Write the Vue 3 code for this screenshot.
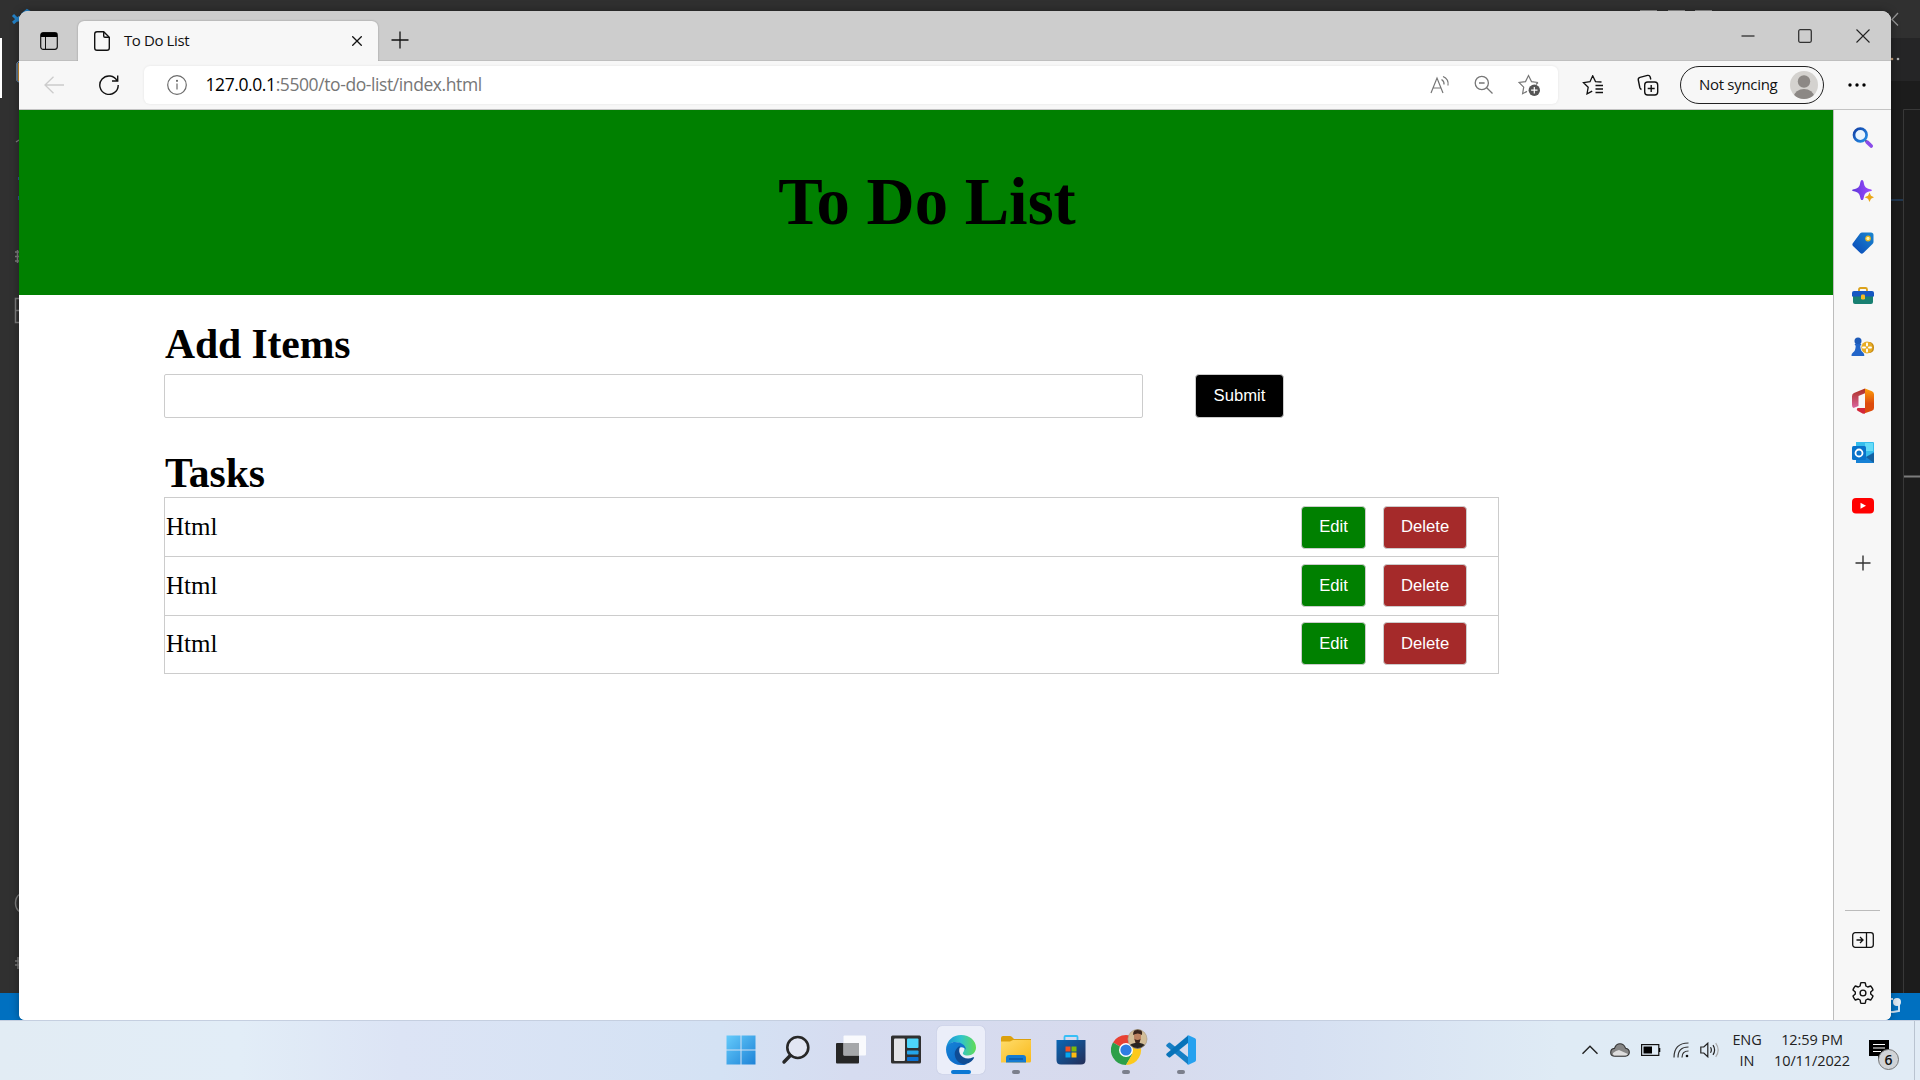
<script setup>
import { ref } from 'vue'

const tasks = ref([
  { id: 1, name: 'Html' },
  { id: 2, name: 'Html' },
  { id: 3, name: 'Html' },
])
const newItem = ref('')
</script>

<template>
  <div class="desktop">
    <!-- Editor window behind the browser -->
    <div class="editor">
      <svg width="1920" height="1020" viewBox="0 0 1920 1020" fill="none">
        <rect width="1920" height="1020" fill="#303030" />
        <path d="M1880 38h40v43h-40z" fill="#252526" />
        <path d="M1880 81h40v912h-40z" fill="#1c1c1c" />
        <path d="M0 993h1920v27H0z" fill="#0070c0" />
        <path d="M0 38h2v60H0z" fill="#fff" />
        <path d="M13 15l6 6M13 23l7-6" stroke="#2382c8" stroke-width="3" />
        <path d="M22 14l5-4 5 3" stroke="#2382c8" stroke-width="2" />
        <path d="M20 61.500h-1.500l-1.500 2v17l1.500 1.500H20" stroke="#8cb9e6" />
        <path d="M18 63h1v18h-1z" fill="#c88a2c" />
        <path d="M16 142l3-2M15 252h4M15 256.500h4M15 261h4M17.500 250v13M20 298.500h-4.500v24H20M16 310.500h4M20 894q-4.500 3-4.500 9t4.500 9M15 961h5M15 965h5M18 957v12" stroke="#7c7c7c" stroke-width="1.500" />
        <path d="M18 177h1v3h-1zM18 196h1v4h-1z" fill="#36558f" />
        <path d="M1640 10.500h17M1668 10.500h17M1695 10.500h17" stroke="#969696" />
        <path d="M1898 13l-6 6.500 6 6" stroke="#969696" stroke-width="1.300" />
        <circle cx="1892" cy="59" r="1.300" fill="#c8a27a" />
        <circle cx="1898" cy="59" r="1.300" fill="#b0b0b0" />
        <path d="M1903.500 993V109.500H1920" stroke="#383838" />
        <path d="M1891 200h12" stroke="#20364e" stroke-width="2" />
        <path d="M1904 476.500h16" stroke="#7c7c7c" stroke-width="2" />
        <path d="M1886 1012h7l6-1v-6" stroke="#cfe2f3" stroke-width="2" />
        <circle cx="1897" cy="1002" r="4" fill="#dfeaf4" />
        <path d="M1889 999h4" stroke="#cfe2f3" stroke-width="2" />
      </svg>
    </div>

    <section class="browser">
      <div class="tabstrip">
        <div class="tab-actions">
          <svg width="18" height="18" viewBox="0 0 18 18" fill="none" stroke="#111">
            <rect x=".7" y=".7" width="16.600" height="16.600" rx="2.500" stroke-width="1.200" />
            <path d="M1 1h16v4H1z" fill="#000" stroke="none" /><path d="M5.500 5v12" />
          </svg>
        </div>
        <div class="tab">
          <svg class="page-icon" width="16" height="20" viewBox="0 0 16 20" fill="none" stroke="#111" stroke-width="1.400">
            <path d="M3 .7h6.700l5.600 5.600V17q0 2.300-2.300 2.300H3Q.7 19.300.7 17V3Q.7.700 3 .7z" /><path d="M9.700.9V5q0 1.300 1.300 1.300h4" />
          </svg>
          <span class="tab-title">To Do List</span>
          <svg class="tab-close" width="10" height="10" viewBox="0 0 10 10" stroke="#111" stroke-width="1.300"><path d="M.3.300l9.400 9.400M9.700.300L.3 9.700" /></svg>
        </div>
        <svg class="new-tab" width="18" height="18" viewBox="0 0 18 18" stroke="#111" stroke-width="1.300"><path d="M9 .5v17M.5 9h17" /></svg>
        <div class="window-buttons">
          <svg width="14" height="14" viewBox="0 0 14 14"><path d="M.5 7h13" stroke="#000" /></svg>
          <svg width="14" height="14" viewBox="0 0 14 14"><rect x=".7" y=".7" width="12.600" height="12.600" rx="1.500" fill="none" stroke="#333" stroke-width="1.300" /></svg>
          <svg width="14" height="14" viewBox="0 0 14 14"><path d="M.5.500l13 13M13.500.500l-13 13" stroke="#222" stroke-width="1.100" /></svg>
        </div>
      </div>

      <div class="toolbar">
        <div class="cell back"><svg width="20" height="18" viewBox="0 0 20 18" fill="none" stroke="#ccc" stroke-width="1.300"><path d="M9.500.700L1 9l8.500 8.300M1 9h19" /></svg></div>
        <div class="cell reload"><svg width="20" height="20" viewBox="0 0 20 20" fill="none" stroke="#111" stroke-width="1.400"><path d="M18.200 6A9.200 9.200 0 1 0 19.200 10M18.700.500V6h-5.700" /></svg></div>
        <div class="address">
          <svg class="info" width="20" height="20" viewBox="0 0 20 20" fill="none" stroke="#6b6b6b" stroke-width="1.200"><circle cx="10" cy="10" r="9.300" /><path d="M10 8.500v6" /><circle cx="10" cy="5.800" r=".5" fill="#6b6b6b" /></svg>
          <span class="url"><b>127.0.0.1</b>:5500/to-do-list/index.html</span>
          <div class="address-icons">
            <svg width="20" height="20" viewBox="0 0 20 20" fill="none" stroke="#777" stroke-width="1.200"><path d="M1 18L7 3l6 15M3.200 13h7.600M11.500 4.500q3 1.800 2.500 5M13 1.500q6 2.500 5 9" /></svg>
            <svg width="20" height="20" viewBox="0 0 20 20" fill="none" stroke="#777" stroke-width="1.300"><circle cx="7.800" cy="8" r="6.600" /><path d="M12.700 12.700l5.800 5.800M5 8h5.600" /></svg>
            <svg width="22" height="22" viewBox="0 0 22 22" fill="none" stroke="#777" stroke-width="1.200"><path d="M20 8.500l-6.500-.9L10.500 1.500 7.500 7.600l-6.500.9 4.700 4.600-1.100 6.600 4.400-2.300M20 8.500l-2 2" /><circle cx="16.300" cy="16.200" r="5.700" fill="#555" stroke="none" /><path d="M16.300 13v6.400M13.100 16.200h6.400" stroke="#fff" /></svg>
          </div>
        </div>
        <svg class="favorites" width="22" height="20" viewBox="0 0 22 20" fill="none" stroke="#111" stroke-width="1.300"><path d="M19.500 7l-6-.4L10.700.800 8 6.700l-6.500.9 4.700 4.600-1.200 6.700 5.200-2.700M13.500 10.500H21M13.500 14H21M13.500 17.500H21" /></svg>
        <svg class="collections" width="22" height="22" viewBox="0 0 22 22" fill="none" stroke="#111" stroke-width="1.400"><rect x="7.700" y="8" width="13" height="13" rx="3" /><path d="M14.200 11v7M10.700 14.500h7M4.500 15.500q-1.300-.5-1.700-2L1.300 6Q.9 4 3 3.400l7.500-2Q12.600 1 13.200 3l.6 2.500" /></svg>
        <div class="profile">
          <span>Not syncing</span>
          <svg width="28" height="28" viewBox="0 0 28 28"><defs><clipPath id="face"><circle cx="14" cy="14" r="14" /></clipPath></defs><g clip-path="url(#face)"><path d="M0 0h28v28H0z" fill="#d4d2cf" /><circle cx="14" cy="10.500" r="6.200" fill="#8c8885" /><ellipse cx="14" cy="25.500" rx="10" ry="7.500" fill="#8c8885" /></g></svg>
        </div>
        <svg class="more" width="18" height="4" viewBox="0 0 18 4"><circle cx="2" cy="2" r="1.700" /><circle cx="9" cy="2" r="1.700" /><circle cx="16" cy="2" r="1.700" /></svg>
      </div>

      <div class="body">
        <main class="page">
          <header class="banner"><h1>To Do List</h1></header>
          <div class="container">
            <h2>Add Items</h2>
            <form class="add-form" @submit.prevent>
              <input v-model="newItem" type="text" />
              <button class="btn submit">Submit</button>
            </form>
            <h2 class="tasks-title">Tasks</h2>
            <ul class="list">
              <li v-for="task in tasks" :key="task.id">
                <span>{{ task.name }}</span>
                <button class="btn edit">Edit</button>
                <button class="btn delete">Delete</button>
              </li>
            </ul>
          </div>
        </main>

        <aside class="sidebar">
          <div><svg width="22" height="22" viewBox="0 0 22 22" fill="none"><defs><linearGradient id="lens" x1="0" y1="0" x2="1" y2="1"><stop stop-color="#123fa5" /><stop offset="1" stop-color="#2491ea" /></linearGradient></defs><path d="M13 13l2 2" stroke="#555" stroke-width="2" /><path d="M15.200 15.200l4 3.800" stroke="#8a4be8" stroke-width="3.700" stroke-linecap="round" /><circle cx="8.300" cy="8" r="6.300" fill="#e9f5ff" stroke="url(#lens)" stroke-width="2.700" /></svg></div>
          <div><svg width="22" height="22" viewBox="0 0 22 22"><defs><linearGradient id="spark"><stop stop-color="#5b35d8" /><stop offset="1" stop-color="#a24bff" /></linearGradient></defs><path d="M10 0q1.500 0 2 4 .7 4 5 5 3 .5 3 1.200t-3 1.200q-4.300 1-5 5-.5 3.600-2 3.600t-2-3.600q-.7-4-5-5-3-.5-3-1.200T3 9q4.300-1 5-5 .5-4 2-4z" fill="url(#spark)" /><path d="M17.500 12.500l1.500 3.200 3 1.600-3 1.500-1.500 3.200-1.500-3.200-3.500-1.500 3.500-1.600z" fill="#eaa719" /></svg></div>
          <div><svg width="22" height="22" viewBox="0 0 22 22"><defs><linearGradient id="tag" x1="1" y1="0" x2="0" y2="1"><stop stop-color="#1b87cf" /><stop offset="1" stop-color="#0a47b8" /></linearGradient></defs><path d="M10 .5h9q2.500 0 2.500 2.500V10q0 1-1 2l-9.200 9q-1.500 1.300-3 0L1 14q-1.300-1.500 0-3L8 1.500q1-1 2-1z" fill="url(#tag)" /><circle cx="16" cy="6.500" r="2.300" fill="#fff3a6" stroke="#e6b51e" stroke-width="1.200" /></svg></div>
          <div><svg width="22" height="22" viewBox="0 0 22 22"><path d="M7 7V4.500Q7 3 8.500 3h5Q15 3 15 4.500V7" fill="none" stroke="#dba21c" stroke-width="1.800" /><path d="M1 9h20v8q0 2-2 2H3q-2 0-2-2z" fill="#188072" /><path d="M0 8q0-2 2-2h18q2 0 2 2v3.500H0z" fill="#1557c2" /><rect x="9" y="9.500" width="4" height="5" rx="1.300" fill="#f4bb24" /></svg></div>
          <div><svg width="23" height="22" viewBox="0 0 23 22"><path d="M15 5h4q4 1 4 5.500T19 16h-4z" fill="#c58912" /><ellipse cx="16" cy="10.500" rx="5.700" ry="6" fill="#e8ad25" /><path d="M16 6.500v2M16 12.500v2M12 10.500h2M18 10.500h2" stroke="#fff" stroke-width="1.900" stroke-linecap="round" /><circle cx="7" cy="4" r="3.500" fill="#1d5ab8" /><path d="M3.500 7h7l-1.200 2Q9.500 14 12 15.500q1.500 1 1.300 3.500H.5q-.3-2.500 1.500-3.500Q4.500 14 4.700 9z" fill="#2265c9" /></svg></div>
          <div><svg width="22" height="26" viewBox="0 0 22 26"><defs><linearGradient id="officeL" y2="1" x2="0"><stop stop-color="#ad2e20" /><stop offset="1" stop-color="#d966a0" /></linearGradient><linearGradient id="officeR" y2="1" x2="0"><stop stop-color="#ffa00a" /><stop offset=".6" stop-color="#dd4b0c" /></linearGradient></defs><path d="M13 .5v4.700L6.500 8v10L1.500 20Q0 19.500 0 17V8.300Q0 6 2 5z" fill="url(#officeL)" /><path d="M13 .5l7 2.700q2 .8 2 3V20q0 2-2 2.700l-8 2.800 1-4z" fill="url(#officeR)" /><path d="M5.500 20H13v5.500l-2 .2-5.500-3q-1.500-1.200 0-2.700z" fill="#d32739" /></svg></div>
          <div><svg width="22" height="22" viewBox="0 0 22 22"><path d="M4 0h17q1 0 1 1v19q0 1-1 1H4z" fill="#36bdec" /><path d="M13 1h8v8h-8z" fill="#66dcf7" /><path d="M4 12l10 3 8-5v10q0 1-1 1H4z" fill="#1681d5" /><path d="M14 15l8-4v10z" fill="#14609f" /><rect y="4" width="14" height="14" rx="1.500" fill="#0872ca" /><circle cx="7" cy="11" r="3.500" fill="none" stroke="#fff" stroke-width="1.800" /></svg></div>
          <div><svg width="22" height="16" viewBox="0 0 22 16"><rect width="22" height="15.500" rx="4" fill="#f00" /><path d="M8.500 4.800v6l5.500-3z" fill="#fff" /></svg></div>
          <div class="add"><svg width="16" height="16" viewBox="0 0 16 16" stroke="#333" stroke-width="1.400"><path d="M8 .5v15M.5 8h15" /></svg></div>
          <hr />
          <div><svg width="22" height="16" viewBox="0 0 22 16" fill="none" stroke="#111" stroke-width="1.300"><rect x=".7" y=".7" width="20.600" height="14.600" rx="2.500" /><path d="M14.500 1v14M4.500 8H11M8 5l3 3-3 3" /></svg></div>
          <div><svg width="22" height="22" viewBox="0 0 22 22" fill="none" stroke="#111" stroke-width="1.400" stroke-linejoin="round"><circle cx="11" cy="11" r="2.900" /><path d="M8.700.900q2.300-.6 4.600 0l.6 3.100 1.800 1 3-1q1.600 1.800 2.300 4l-2.300 2v2l2.300 2q-.7 2.200-2.300 4l-3-1-1.800 1-.6 3.100q-2.300.6-4.600 0L8.100 18l-1.800-1-3 1Q1.700 16.200 1 14l2.300-2v-2L1 8q.7-2.200 2.300-4l3 1 1.800-1z" /></svg></div>
        </aside>
      </div>
    </section>

    <footer class="taskbar">
      <div class="apps">
        <div class="app"><svg width="30" height="30" viewBox="0 0 30 30"><defs><linearGradient id="win" x2="1" y2="1"><stop stop-color="#65cbfb" /><stop offset="1" stop-color="#1e83d7" /></linearGradient></defs><path d="M.5.500h14v14H.5zM15.500.500h14v14h-14zM.5 15.500h14v14H.5zM15.500 15.500h14v14h-14z" fill="url(#win)" /></svg></div>
        <div class="app"><svg width="30" height="30" viewBox="0 0 30 30" fill="none" stroke="#272727"><circle cx="16.800" cy="12.500" r="10.500" stroke-width="2.600" fill="#e2e6f3" /><path d="M9.300 20.500L3 27" stroke-width="3.400" stroke-linecap="round" /></svg></div>
        <div class="app"><svg width="30" height="30" viewBox="0 0 30 30"><rect y="8" width="23" height="20.500" rx="1" fill="#262626" /><rect x="7.500" y=".5" width="22.500" height="20" rx="1" fill="#fff" opacity=".85" /><path d="M7.500 8H23v12.500H7.500z" fill="#a5a7aa" /></svg></div>
        <div class="app"><svg width="30" height="30" viewBox="0 0 30 30"><rect y=".5" width="30" height="28" rx="1.500" fill="#303030" /><rect x="3" y="3.500" width="11" height="22.500" rx="1" fill="#e2e3e7" /><rect x="16" y="3.500" width="11.500" height="9.500" rx="1" fill="#4dd6fa" /><rect x="16" y="15.500" width="11.500" height="4" rx=".7" fill="#25a5e8" /><rect x="16" y="22" width="11.500" height="4" rx=".7" fill="#0c72d2" /></svg></div>
        <div class="app active"><svg width="30" height="30" viewBox="0 0 30 30"><defs><linearGradient id="edgeTop"><stop stop-color="#188ed6" /><stop offset=".5" stop-color="#2fc4cd" /><stop offset="1" stop-color="#62dc53" /></linearGradient><linearGradient id="edgeLeft" y2="1" x2="1"><stop stop-color="#1684d7" /><stop offset="1" stop-color="#0b63c4" /></linearGradient></defs><path d="M0 14C1 5 7 0 15 0c9 0 15 6 15 12.500 0 5-4 8-8 8-5 0-6-2-4.500-3.500C21 11 14 7 9 7c-4 0-7 3-9 7z" fill="url(#edgeTop)" /><path d="M0 14C1 9 5 7 9 7c6 0 11 3 11 8-2-4-8-4-9 2-1 7 4 12 10 12-2 1-4 1-6 1C6 30 0 23 0 14z" fill="url(#edgeLeft)" /><path d="M14 11c-4 2-6 6-5 10 1 5 6 9 11 8 4-1 7-4 8-6 .5-1-.5-1-1-.7-5 2.700-11 .7-13-3.300-1.500-3-.5-6 0-8z" fill="#0f4c94" /></svg><i /></div>
        <div class="app"><svg width="30" height="30" viewBox="0 0 30 30"><defs><linearGradient id="folder" x2="1" y2="1"><stop stop-color="#ffdc6b" /><stop offset="1" stop-color="#f9b91a" /></linearGradient></defs><path d="M0 3q0-2 2-2h7q1 0 2 1l2 2h17v5H0z" fill="#dca00c" /><path d="M0 6.500h9L12 5h18v21q0 1.500-1.500 1.500H0z" fill="url(#folder)" /><path d="M5 27.500V23q0-3 3-3h14q3 0 3 3v4.500z" fill="#157bd1" /><path d="M8 24h14" stroke="#0b529c" stroke-width="1.300" /></svg><i /></div>
        <div class="app"><svg width="30" height="30" viewBox="0 0 30 30"><defs><linearGradient id="store" x2="1" y2="1"><stop stop-color="#0a67b5" /><stop offset="1" stop-color="#242d57" /></linearGradient></defs><path d="M8.500 6V2q0-1 1-1h11q1 0 1 1v4" fill="none" stroke="#36bff6" stroke-width="1.800" /><path d="M.5 5h29v20q0 4.500-4.500 4.500H5Q.5 29.500.5 25z" fill="url(#store)" /><path d="M9.500 11.500h5v5h-5z" fill="#f15123" /><path d="M15.500 11.500h5v5h-5z" fill="#80ba08" /><path d="M9.500 17.500h5v5h-5z" fill="#05a7f0" /><path d="M15.500 17.500h5v5h-5z" fill="#feba11" /></svg></div>
        <div class="app"><svg class="chrome" width="38" height="38" viewBox="0 0 38 38"><path d="M15 23L2 15.500A15 15 0 0 1 28 15.500z" fill="#e84134" /><path d="M15 23L2 15.500A15 15 0 0 0 15 38l6.500-11z" fill="#2c9f49" /><path d="M15 23l13-7.500A15 15 0 0 1 15 38l6.500-11.200z" fill="#fcc91c" /><circle cx="15" cy="23" r="7" fill="#fff" /><circle cx="15" cy="23" r="5.600" fill="#2f7de1" /><defs><clipPath id="user"><circle cx="26.500" cy="12" r="9.700" /></clipPath></defs><g clip-path="url(#user)"><path d="M16 2h22v22H16z" fill="#d2bd98" /><path d="M16 24q0-7 8-8h5q7 1 8 8z" fill="#292522" /><path d="M23 6q3.500-4 7 0v6q-3.500 8-7 0z" fill="#bc8261" /><path d="M22 8q0-6 5-6t4 6q-4-3-9 0zM23.500 12q3 2 6 0l-1 4h-4z" fill="#3b251c" /></g><circle cx="26.500" cy="12" r="9.500" fill="none" stroke="#a69c8a" stroke-width=".6" /></svg><i /></div>
        <div class="app"><svg width="30" height="30" viewBox="0 0 30 30"><path d="M.7 9.500l2-1.700q.8-.5 1.500 0L22 22v7.500L.7 11.500q-1-1 0-2z" fill="#167fc5" /><path d="M.7 20.500l2 1.700q.8.500 1.500 0L22 8V.5L.7 18.500q-1 1 0 2z" fill="#0873b9" /><path d="M21.500.300Q22 0 23 .4l6 2.900q1 .5 1 1.700v20q0 1.200-1 1.700l-6 2.900q-1 .4-1.500.1.500-.5.500-1.700V2q0-1.200-.5-1.700z" fill="#26a1ef" /></svg><i /></div>
      </div>
      <div class="tray">
        <svg width="16" height="10" viewBox="0 0 16 10" fill="none" stroke="#222" stroke-width="1.400"><path d="M.5 8.800L8 1.200l7.500 7.600" /></svg>
        <svg class="cloud" width="20" height="14" viewBox="0 0 20 14"><path d="M5 13.300Q.7 13.300.7 9.500T4.500 5.400Q6 .7 10 .7t5.500 4.500q3.800.6 3.800 4t-4 4.100z" fill="#858585" stroke="#333" stroke-width="1.100" /><path d="M5 12.600q-2.500-.3-2-2.700 3-2.500 6-3l9 4q-1 1.700-3 1.700z" fill="#dedede" /></svg>
        <svg width="20" height="12" viewBox="0 0 20 12"><rect x=".6" y=".6" width="17.200" height="10.800" fill="none" stroke="#111" stroke-width="1.200" /><path d="M2.500 2.500H11v7H2.500zM18 4h1.300v4H18z" /></svg>
        <svg class="wifi" width="16" height="16" viewBox="0 0 16 16" fill="none" stroke="#333" stroke-width="1.200"><path d="M1 15.500Q1 1 15.500 1M5 15.500Q5 5 15.500 5M9 15.500Q9 9 15.500 9" /><circle cx="14" cy="14" r="1.300" fill="#111" stroke="none" /></svg>
        <svg width="20" height="16" viewBox="0 0 20 16" fill="none" stroke="#222" stroke-width="1.200"><path d="M.8 5h3l4-3.800v13.600l-4-3.800h-3zM10.500 5.300q1.700 2.700 0 5.400M13 3.200q3.200 4.800 0 9.600" /><path d="M15.700 1.200q5 6.800 0 13.600" stroke="#aaa" /></svg>
        <div class="lang"><span>ENG</span><span>IN</span></div>
        <div class="clock"><span class="time">12:59 PM</span><span class="date">10/11/2022</span></div>
        <div class="notice">
          <svg width="20" height="20" viewBox="0 0 20 20"><path d="M0 0h20v16h-7l-4 4v-4H0z" fill="#000" /><path d="M4 4.500h12M4 8h12M4 11.500h8" stroke="#fff" /></svg>
          <span class="count">6</span>
        </div>
      </div>
    </footer>
  </div>
</template>

<style>
body { margin: 0; overflow: hidden; }
</style>

<style scoped>
* { box-sizing: border-box; }
svg { display: block; flex: none; }
.desktop { position: relative; width: 1920px; height: 1080px; overflow: hidden; padding: 11px 29px 0 19px; font-family: "Open Sans", "Noto Sans", sans-serif; }
.editor { position: absolute; left: 0; top: 0; }
.browser { position: relative; display: flex; flex-direction: column; width: 1872px; height: 1009px; border-radius: 9px 9px 6px 6px; overflow: hidden; background: #f7f7f7; box-shadow: 0 0 8px rgba(0, 0, 0, .35); }

.tabstrip { display: flex; height: 50px; flex: none; background: #cdcdcd; border-bottom: 1px solid #bfbfbf; }
.tab-actions { display: flex; align-items: center; justify-content: center; width: 59px; padding: 11px 0 0 1px; }
.tab { position: relative; display: flex; align-items: center; width: 300px; height: 40px; margin-top: 10px; padding: 0 16px 0 16px; background: #f7f7f7; border-radius: 6px 6px 0 0; box-shadow: 0 0 2px rgba(0, 0, 0, .3); }
.tab::after { content: ""; position: absolute; left: 0; right: 0; bottom: -3px; height: 3px; background: #f7f7f7; }
.tab-title { flex: 1; margin-left: 14px; padding-bottom: 2px; font-size: 15px; letter-spacing: -.4px; color: #111; }
.new-tab { margin: 20px 0 0 12.500px; }
.window-buttons { display: flex; gap: 43.500px; margin: 17.500px 21.500px 0 auto; }

.toolbar { position: relative; display: flex; align-items: center; height: 49px; flex: none; padding-bottom: 1px; border-bottom: 1px solid #c4c4c4; background: #f7f7f7; }
.cell { display: flex; justify-content: center; width: 55px; }
.back { margin-left: 7px; }
.address { display: flex; align-items: center; width: 1414px; height: 38px; margin-left: 8px; padding: 0 18px 0 22.500px; background: #fff; border-radius: 6px; box-shadow: 0 0 3px rgba(0, 0, 0, .08); }
.url { flex: 1; margin-left: 19px; padding-bottom: 2px; font-size: 17.500px; letter-spacing: -.41px; color: #767676; white-space: nowrap; }
.url b { font-weight: 400; color: #000; }
.address-icons { display: flex; align-items: center; gap: 24px; }
.favorites { margin-left: 24px; }
.collections { margin-left: 33px; }
.profile { display: flex; align-items: center; justify-content: space-between; width: 144px; height: 38px; margin-left: 21px; padding: 0 5px 0 18px; border: 1.500px solid #222; border-radius: 19px; font-size: 15px; letter-spacing: -.3px; color: #111; white-space: nowrap; }
.profile span { padding-bottom: 2px; }
.more { margin-left: 23.500px; }

.body { display: flex; flex: 1; min-height: 0; }
.page { width: 1814px; background: #fff; font-family: "Liberation Serif", serif; color: #000; }
.banner { display: flex; align-items: center; justify-content: center; height: 185px; padding: 0 0 1px 2px; background: green; }
h1 { margin: 0; font-size: 66.670px; line-height: 76px; font-weight: 700; }
.container { width: 1335px; margin-left: 145px; padding-top: 25px; }
h2 { margin: 0 0 0 1px; font-size: 41.670px; line-height: 48px; font-weight: 700; letter-spacing: -.1px; }
.add-form { display: flex; gap: 52px; margin-top: 6px; }
.add-form input { width: 979px; height: 44px; padding: 0 8px; border: 1px solid #ccc; border-radius: 2px; outline: none; font-size: 16.670px; }
.tasks-title { margin-top: 31px; }
.list { margin: 0; padding: 0; border: 1px solid #ccc; list-style: none; }
.list li { display: flex; align-items: flex-start; height: 58px; padding: 8px 31px 0 1px; font-size: 25px; line-height: 43px; }
.list li + li { border-top: 1px solid #ccc; }
.list li:nth-child(2) { height: 59px; padding-top: 7px; }
.list li:nth-child(3) { padding-top: 6px; }
.list span { flex: 1; }
.list li:first-child span { line-height: 41px; }
.btn { height: 43px; padding: 0 17px; border: 1px solid #ccc; border-radius: 4px; font-family: "Liberation Sans", Arial, sans-serif; font-size: 16.670px; color: #fff; }
.list li:first-child .btn { padding-bottom: 2px; }
.submit { width: 89px; height: 44px; background: #000; }
.edit { width: 65px; background: green; }
.delete { width: 84px; margin-left: 17px; background: brown; }

.sidebar { display: flex; flex-direction: column; align-items: center; flex: 1; padding: 2px 0 1px; border-left: 1px solid #bdbdbd; background: #f7f7f7; }
.sidebar div { display: flex; align-items: center; justify-content: center; flex: none; height: 52.500px; }
.sidebar .add { height: 61px; }
hr { width: 35px; height: 1px; margin: auto 0 3px; border: 0; background: #bbb; flex: none; }

.taskbar { position: absolute; left: 0; bottom: 0; display: flex; width: 1920px; height: 60px; border-top: 1px solid #c5cfe0; background: linear-gradient(90deg, #e2ecf4 0, #e2edf7 240px, #dce4f5 400px, #d4e2f4 720px, #d6dcf0 850px, #d7daed 1130px, #d6e0f2 1300px, #dfebf5 1560px, #e1ebf5); }
.apps { display: flex; gap: 7px; margin: 5px 0 0 717px; }
.app { position: relative; display: flex; align-items: center; justify-content: center; width: 48px; height: 48px; border-radius: 5px; }
.active { background: #ebeef9; box-shadow: 0 0 1px #9faac7; }
.app i { position: absolute; bottom: 0; left: 20px; width: 8px; height: 4px; border-radius: 2px; background: #7b7f8c; }
.active i { left: 14px; width: 20px; background: #0b78d4; }
.chrome { margin: -8px 0 0 8px; }
.tray { display: flex; align-items: center; gap: 11px; width: 333px; margin-left: auto; margin-right: 5px; padding-bottom: 1px; border-right: 1px solid #b9c3d0; color: #222; }
.cloud { margin-left: 1px; }
.wifi { margin-left: 1px; }
.lang, .clock { display: flex; flex-direction: column; align-items: center; font-size: 14.500px; line-height: 21px; letter-spacing: -.1px; white-space: nowrap; }
.lang { width: 30px; margin-left: 1px; }
.clock { width: 76px; margin-left: 1px; }
.notice { position: relative; margin-left: 8px; }
.count { position: absolute; left: 9px; top: 9px; display: flex; align-items: center; justify-content: center; width: 21px; height: 21px; border: 1px solid #777; border-radius: 50%; background: #d0d3d7; font-size: 14px; font-weight: 600; color: #111; }
</style>
